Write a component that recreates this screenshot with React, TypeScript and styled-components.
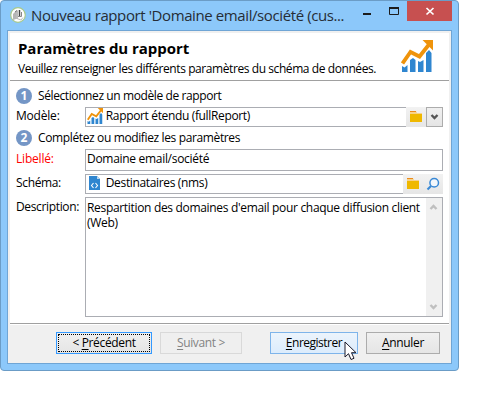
import React from 'react';
import styled, { createGlobalStyle } from 'styled-components';

const GlobalStyle = createGlobalStyle`
  * { box-sizing: border-box; }
  body { margin: 0; background: #fff; overflow: hidden; }
  body, button { font: 12px/16px "Open Sans", "Noto Sans", sans-serif; color: #000; }
`;

const Window = styled.div`
  position: relative;
  width: 459px;
  height: 371px;
  padding: 0 6px 6px;
  border: 1px solid #6b9cc6;
  border-radius: 4px;
  background: #8cc8fa;
  display: flex;
  flex-direction: column;
`;

const TitleBar = styled.div`
  height: 29px;
  display: flex;
  align-items: flex-start;
  flex: none;
  padding-left: 3px;
`;

const Spaced = styled.span<{ $ls?: number }>`
  letter-spacing: ${p => p.$ls ?? -0.35}px;
  white-space: pre;
`;

const Caption = styled(Spaced)`
  margin: 3px 0 0 5px;
  flex: 1;
  min-width: 0;
  font-size: 15px;
  line-height: 22px;
  color: #262d36;
`;

const LogoSlot = styled.div`
  width: 16px;
  height: 16px;
  margin-top: 6px;
`;

const Controls = styled.div`
  display: flex;
  height: 20px;
  flex: none;
`;

const Control = styled.div<{ $close?: boolean; $w: number }>`
  width: ${p => p.$w}px;
  background: ${p => (p.$close ? '#c75050' : 'transparent')};
  svg { display: block; }
`;

const Client = styled.div`
  height: 334px;
  border: 1px solid #6fa5d5;
  background: #f0f0f0;
  padding: 2px 2px 0;
  display: flex;
  flex-direction: column;
`;

const Header = styled.div`
  height: 48px;
  background: #fff;
  border-bottom: 1px solid #a0a0a0;
  display: flex;
  justify-content: space-between;
  padding: 0 16px 0 8px;
`;

const HeaderIcon = styled.div`
  margin-top: 7px;
  svg { display: block; }
`;

const Heading = styled.h1`
  margin: 5px 0 0;
  font-size: 15px;
  line-height: 20px;
  font-weight: 700;
`;

const Sub = styled.div`
  margin-top: 3px;
`;

const Body = styled.div`
  height: 243px;
  background: #fff;
  border-bottom: 1px solid #a0a0a0;
  padding: 7px 6px 0;
`;

const Step = styled.div`
  display: flex;
  align-items: center;
  height: 16px;
  gap: 6px;
`;

const Row = styled.div<{ $h: number; $mt: number }>`
  display: flex;
  height: ${p => p.$h}px;
  margin-top: ${p => p.$mt}px;
`;

const Label = styled.label<{ $red?: boolean; $top?: number }>`
  width: 69px;
  flex: none;
  padding-top: ${p => p.$top ?? 1}px;
  color: ${p => (p.$red ? '#f00' : '#000')};
`;

const Field = styled.div<{ $open?: boolean; $pt?: number }>`
  flex: 1;
  min-width: 0;
  display: flex;
  align-items: flex-start;
  padding: ${p => p.$pt ?? 0}px 0 0 1px;
  border: 1px solid #abadb3;
  border-right-width: ${p => (p.$open ? 0 : 1)}px;
  svg { flex: none; }
`;

const Tools = styled.div<{ $w: number }>`
  width: ${p => p.$w}px;
  height: 20px;
  background: linear-gradient(#f2f2f2, #e6e6e6);
  display: flex;
  svg { display: block; }
`;

const Drop = styled.div`
  width: 17px;
  height: 20px;
  border: 1px solid #acacac;
  background: linear-gradient(#f0f0f0, #e5e5e5);
`;

const Area = styled(Field)`
  padding: 0;
  justify-content: space-between;
`;

const AreaText = styled.div`
  flex: 1;
  min-width: 0;
  padding: 2px 0 0 1px;
  line-height: 15px;
`;

const Scroll = styled.div`
  width: 16px;
  height: 118px;
  flex: none;
  background: #f0f0f0;
  display: flex;
  flex-direction: column;
  justify-content: space-between;
`;

const Footer = styled.div`
  border-top: 1px solid #fff;
  height: 38px;
  display: flex;
  padding: 7px 9px 0 46px;
`;

const Button = styled.button<{ $w: number; $ml?: number; $kind?: 'focus' | 'off' | 'hot' }>`
  width: ${p => p.$w}px;
  height: 22px;
  margin: 0 0 0 ${p => p.$ml ?? 0}px;
  padding: 0;
  line-height: 18px;
  border: 1px solid ${p => (p.$kind === 'focus' ? '#3399ff' : p.$kind === 'off' ? '#d9d9d9' : p.$kind === 'hot' ? '#7eb4ea' : '#acacac')};
  background: ${p => (p.$kind === 'off' ? '#efefef' : p.$kind === 'hot' ? 'linear-gradient(#ecf4fc, #dcecfc)' : 'linear-gradient(#f0f0f0, #e5e5e5)')};
  color: ${p => (p.$kind === 'off' ? '#838383' : '#000')};
  outline: ${p => (p.$kind === 'focus' ? '1px dotted #000' : 'none')};
  outline-offset: -3px;
  u { text-underline-offset: 2px; text-decoration-thickness: 1px; text-decoration-skip-ink: none; }
`;

const CursorLayer = styled.div`
  position: absolute;
  left: 343px;
  top: 340px;
  svg { display: block; }
`;

const Chart = ({ size }: { size: number }) => (
  <svg width={size} height={size} viewBox="0 0 32 32">
    <path d="M1 26l2.500 1.500L6.500 25v7H1zM9 20l3-2 2.500 2v12H9zM17 21l2 1 3.500-2v12H17zM25 13l3-3 2.500 3v19H25z" fill="#2f86d0" />
    <path d="M1.500 23.500L9.500 12l9 4.500L28 4.500" fill="none" stroke="#ef930b" strokeWidth="3.800" />
    <path d="M21.500 0H32v10.500z" fill="#ef930b" />
  </svg>
);

const Folder = () => (
  <svg width="20" height="20">
    <path d="M4 4h6l1 2h5v2H4z" fill="#f7d28a" />
    <path d="M4 4h6v1H4z" fill="#ec8b1c" />
    <path d="M4 7h12v8H4z" fill="#efb800" />
  </svg>
);

const Chevron = ({ w, h, color, up }: { w: number; h: number; color: string; up?: boolean }) => (
  <svg width={w} height={h} viewBox={`${-w / 2} ${-h / 2} ${w} ${h}`}>
    <path d={up ? 'M-3 2L0 -1L3 2' : 'M-3 -2L0 1L3 -2'} fill="none" stroke={color} strokeWidth="2.400" />
  </svg>
);

const Badge = ({ n }: { n: number }) => (
  <svg width="16" height="16">
    <circle cx="8" cy="8" r="8" fill="#7496c6" />
    <text x="8" y="12.300" textAnchor="middle" fontSize="12" fontWeight="700" fill="#fff">{n}</text>
  </svg>
);

const Logo = () => (
  <svg width="16" height="16">
    <circle cx="8" cy="8" r="7.300" fill="#fff" stroke="#a8c98b" strokeWidth="1.200" />
    <path d="M3 7l3-3v8l-3 1z" fill="#b5b5b5" />
    <path d="M5 5l2-1.500V12" stroke="#777" fill="none" />
    <path d="M9.500 3v6.500" stroke="#444" strokeWidth="1.500" fill="none" />
    <path d="M8 9.500h3.500V5" stroke="#888" fill="none" />
    <path d="M7 11.500l4 1.500 2-2.500" stroke="#bbb" fill="none" />
  </svg>
);

const SchemaFile = () => (
  <svg width="16" height="16">
    <path d="M2 1h8l3 3v11H2z" fill="#2f86d0" />
    <path d="M10 1v3h3z" fill="#b9d7f0" />
    <path d="M6.500 8l-2 2.500 2 2.500M8.500 8l2 2.500-2 2.500" fill="none" stroke="#fff" strokeWidth="1.100" />
  </svg>
);

const Lens = () => (
  <svg width="20" height="20">
    <circle cx="11.200" cy="8.800" r="4.300" fill="#f4f8fc" stroke="#3b8ad6" strokeWidth="1.500" />
    <path d="M8 12l-3.500 3.500" stroke="#3b8ad6" strokeWidth="2.200" />
  </svg>
);

export default function App() {
  return (
    <>
      <GlobalStyle />
      <Window>
        <TitleBar>
          <LogoSlot><Logo /></LogoSlot>
          <Caption $ls={-0.4}>Nouveau rapport 'Domaine email/société (cus...</Caption>
          <Controls>
            <Control $w={27}><svg width="27" height="20"><path d="M3 12h8v2H3z" fill="#1c1c1c" /></svg></Control>
            <Control $w={20}><svg width="20" height="20"><path d="M2.500 7v6.500h9V7" fill="none" stroke="#1c1c1c" /><path d="M2 6h10v2H2z" fill="#1c1c1c" /></svg></Control>
            <Control $close $w={45}><svg width="45" height="20"><path d="M19.500 7l7 6.500M26.500 7l-7 6.500" stroke="#fff" strokeWidth="1.700" /></svg></Control>
          </Controls>
        </TitleBar>
        <Client>
          <Header>
            <div>
              <Heading><Spaced $ls={-0.05}>Paramètres du rapport</Spaced></Heading>
              <Sub><Spaced $ls={-0.42}>Veuillez renseigner les différents paramètres du schéma de données.</Spaced></Sub>
            </div>
            <HeaderIcon><Chart size={32} /></HeaderIcon>
          </Header>
          <Body>
            <Step><Badge n={1} /><Spaced $ls={-0.4}>Sélectionnez un modèle de rapport</Spaced></Step>
            <Row $h={20} $mt={3}>
              <Label><Spaced $ls={-0.2}>Modèle:</Spaced></Label>
              <Field $open><Chart size={16} /><Spaced> Rapport étendu (fullReport)</Spaced></Field>
              <Tools $w={20}><Folder /></Tools>
              <Drop><Chevron w={15} h={18} color="#555" /></Drop>
            </Row>
            <Row $h={16} $mt={3}><Step><Badge n={2} /><Spaced $ls={-0.37}>Complétez ou modifiez les paramètres</Spaced></Step></Row>
            <Row $h={22} $mt={3}>
              <Label $red $top={2}><Spaced $ls={-0.2}>Libellé:</Spaced></Label>
              <Field $pt={1}><Spaced $ls={-0.3}>Domaine email/société</Spaced></Field>
            </Row>
            <Row $h={20} $mt={3}>
              <Label><Spaced>Schéma:</Spaced></Label>
              <Field $open><SchemaFile /><Spaced> Destinataires (nms)</Spaced></Field>
              <Tools $w={40}><Folder /><Lens /></Tools>
            </Row>
            <Row $h={120} $mt={3}>
              <Label $top={2}><Spaced>Description:</Spaced></Label>
              <Area>
                <AreaText><Spaced $ls={-0.32}>{"Respartition des domaines d'email pour chaque diffusion client\n(Web)"}</Spaced></AreaText>
                <Scroll><Chevron w={15} h={18} color="#bfbfbf" up /><Chevron w={15} h={18} color="#bfbfbf" /></Scroll>
              </Area>
            </Row>
          </Body>
          <Footer>
            <Button $w={96} $kind="focus"><Spaced>&lt; <u>P</u>récédent</Spaced></Button>
            <Button $w={82} $ml={8} $kind="off"><Spaced><u>S</u>uivant &gt;</Spaced></Button>
            <Button $w={88} $ml={28} $kind="hot"><Spaced $ls={-0.5}><u>E</u>nregistrer</Spaced></Button>
            <Button $w={74} $ml={8}><Spaced><u>A</u>nnuler</Spaced></Button>
          </Footer>
        </Client>
        <CursorLayer>
          <svg width="14" height="20"><path d="M1 1v15l3.500-3.300L7 18.500l3-1.200-2.500-5.600h4.500z" fill="#fff" stroke="#1a1a2a" /></svg>
        </CursorLayer>
      </Window>
    </>
  );
}
